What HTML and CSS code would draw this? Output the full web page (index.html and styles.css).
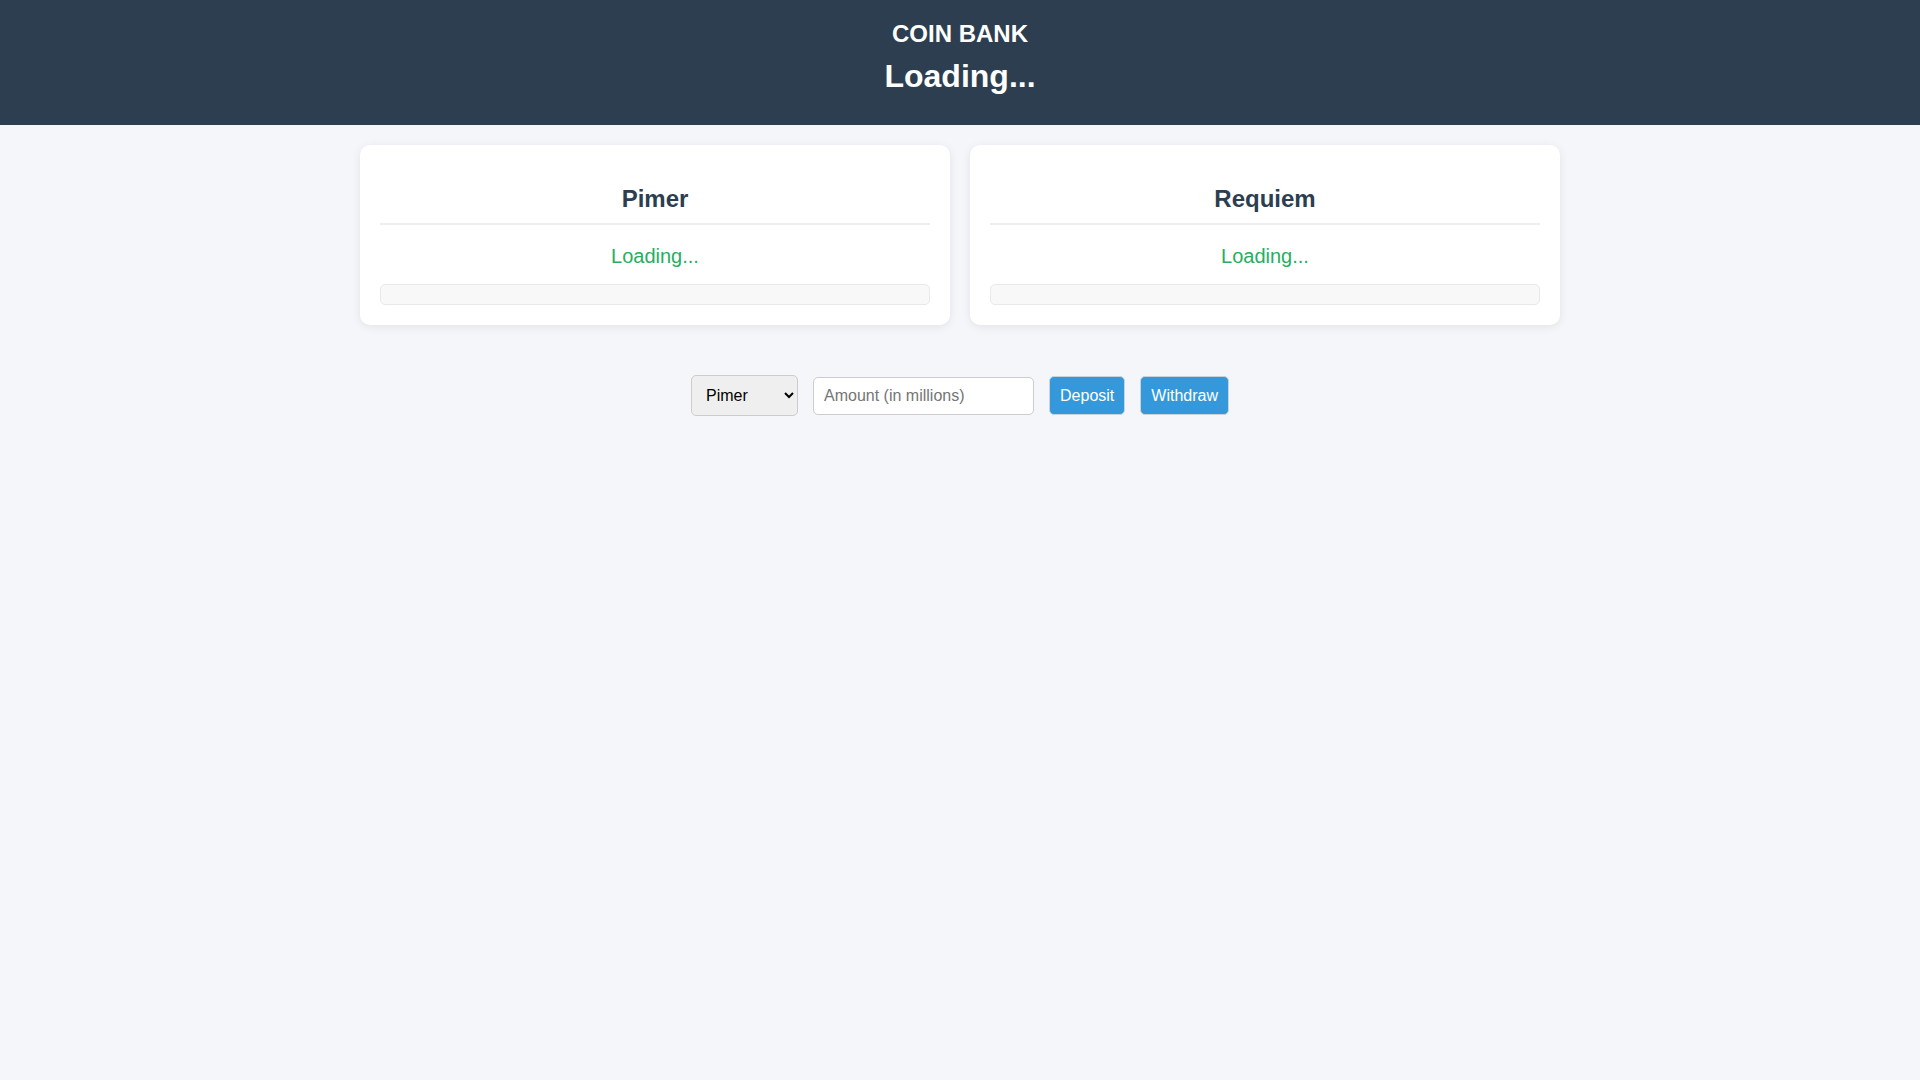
FILE: index.html
```html
<!DOCTYPE html>
<html lang="en">
<head>
<meta charset="utf-8">
<title>Coin Bank</title>
<link rel="stylesheet" href="styles.css">
</head>
<body>
<header class="top">
  <h1 class="brand">COIN BANK</h1>
  <h2 class="status">Loading...</h2>
</header>
<main class="wrap">
  <section class="accounts">
    <div class="card">
      <h2 class="card-title">Pimer</h2>
      <div class="balance">Loading...</div>
      <div class="bar"></div>
    </div>
    <div class="card">
      <h2 class="card-title">Requiem</h2>
      <div class="balance">Loading...</div>
      <div class="bar"></div>
    </div>
  </section>
  <section class="controls">
    <select class="field select">
      <option>Pimer</option>
      <option>Requiem</option>
    </select>
    <input class="field amount" type="text" placeholder="Amount (in millions)">
    <button class="btn">Deposit</button>
    <button class="btn">Withdraw</button>
  </section>
</main>
</body>
</html>
```

FILE: styles.css
```css
* { box-sizing: border-box; }

body {
  margin: 0;
  background: #f4f6f9;
  font-family: "Liberation Sans", Arial, sans-serif;
  color: #2c3e50;
}

.top {
  background: #2c3e50;
  color: #ffffff;
  text-align: center;
  padding: 20px 20px 20px;
  height: 125px;
}

.brand {
  margin: 0;
  font-size: 24px;
  font-weight: bold;
}

.status {
  margin: 10px 0 0;
  font-size: 32px;
  font-weight: bold;
}

.wrap {
  max-width: 1200px;
  margin: 0 auto;
}

.accounts {
  display: grid;
  grid-template-columns: 1fr 1fr;
  gap: 20px;
  margin-top: 20px;
}

.card {
  background: #ffffff;
  border-radius: 10px;
  padding: 20px;
  box-shadow: 0 2px 10px rgba(0, 0, 0, 0.08);
  text-align: center;
}

.card-title {
  margin: 20px 0 20px;
  padding-bottom: 10px;
  border-bottom: 2px solid #eeeeee;
  font-size: 24px;
  font-weight: bold;
  color: #2c3e50;
}

.balance {
  font-size: 20px;
  color: #27ae60;
  margin-bottom: 16px;
}

.bar {
  height: 21px;
  background: #f8f8f8;
  border: 1px solid #e9e9e9;
  border-radius: 5px;
}

.controls {
  display: flex;
  justify-content: center;
  align-items: center;
  gap: 15px;
  margin-top: 50px;
}

.field {
  font-family: "Liberation Sans", Arial, sans-serif;
  font-size: 16px;
  border: 1px solid #cccccc;
  border-radius: 5px;
}

.select {
  padding: 10px;
  background: #efefef;
  color: #000000;
  height: 41px;
}

.amount {
  padding: 9px 10px;
  width: 221px;
  height: 38px;
  background: #ffffff;
  color: #000;
}

.amount::placeholder { color: #757575; }

.btn {
  font-family: "Liberation Sans", Arial, sans-serif;
  font-size: 16px;
  padding: 0 10px;
  height: 39px;
  background: #3498db;
  color: #ffffff;
  border: 1px solid #c9d3dc;
  border-radius: 5px;
}
```
